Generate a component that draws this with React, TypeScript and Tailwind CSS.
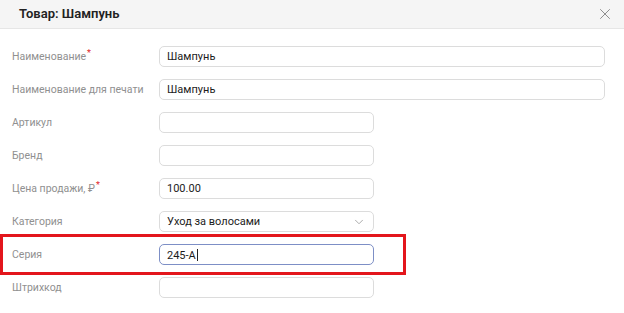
import { ChevronDown, X } from "lucide-react"

type Row = {
  label: string
  value?: string
  required?: boolean
  wide?: boolean
  select?: boolean
  focused?: boolean
}

const rows: Row[] = [
  { label: "Наименование", value: "Шампунь", required: true, wide: true },
  { label: "Наименование для печати", value: "Шампунь", wide: true },
  { label: "Артикул" },
  { label: "Бренд" },
  { label: "Цена продажи, ₽", value: "100.00", required: true },
  { label: "Категория", value: "Уход за волосами", select: true },
  { label: "Серия", value: "245-А", focused: true },
  { label: "Штрихкод" },
]

function Field({ row }: { row: Row }) {
  const width = row.wide ? "w-[446px]" : "w-[215px]"
  const border = row.focused ? "border-[#7d8fc6]" : "border-[#dcdcdc]"
  return (
    <div
      className={`flex h-[21px] items-center rounded-[5px] border ${border} ${width} bg-white pl-[7px] pr-[7px] text-[11px] text-[#1c1c1c]`}
    >
      <span className="flex-1 truncate leading-[15px]">
        {row.value}
        {row.focused && <span className="ml-px inline-block h-[12px] w-px translate-y-[2px] bg-[#222]" />}
      </span>
      {row.select && <ChevronDown className="h-[14px] w-[14px] text-[#a0a0a0]" strokeWidth={1.5} />}
    </div>
  )
}

export default function App() {
  return (
    <div
      className="h-[313px] w-[624px] overflow-hidden bg-white"
      style={{ fontFamily: "Roboto, 'Noto Sans', sans-serif" }}
    >
      <div className="flex h-[29px] items-center justify-between border-b border-[#e6e6e6] bg-[#f5f5f5] pl-[19px] pr-[10px]">
        <h1 className="text-[13px] font-semibold text-[#222]">Товар: Шампунь</h1>
        <X className="h-[18px] w-[18px] text-[#8c8c8c]" strokeWidth={1.3} />
      </div>

      <div className="flex flex-col gap-[12px] pt-[17px]">
        {rows.map((row) => {
          const line = (
            <div className="flex items-center">
              <div className="w-[159px] pl-[12px] text-[10.5px] text-[#909090]">
                {row.label}
                {row.required && (
                  <span className="relative -top-[4px] ml-px text-[9px] text-[#e0262b]">*</span>
                )}
              </div>
              <Field row={row} />
            </div>
          )
          if (row.focused) {
            return (
              <div
                key={row.label}
                className="-my-[10px] w-[406px] border-[3px] border-[#e3161c] py-[7px]"
              >
                <div className="-ml-[3px]">{line}</div>
              </div>
            )
          }
          return <div key={row.label}>{line}</div>
        })}
      </div>
    </div>
  )
}
